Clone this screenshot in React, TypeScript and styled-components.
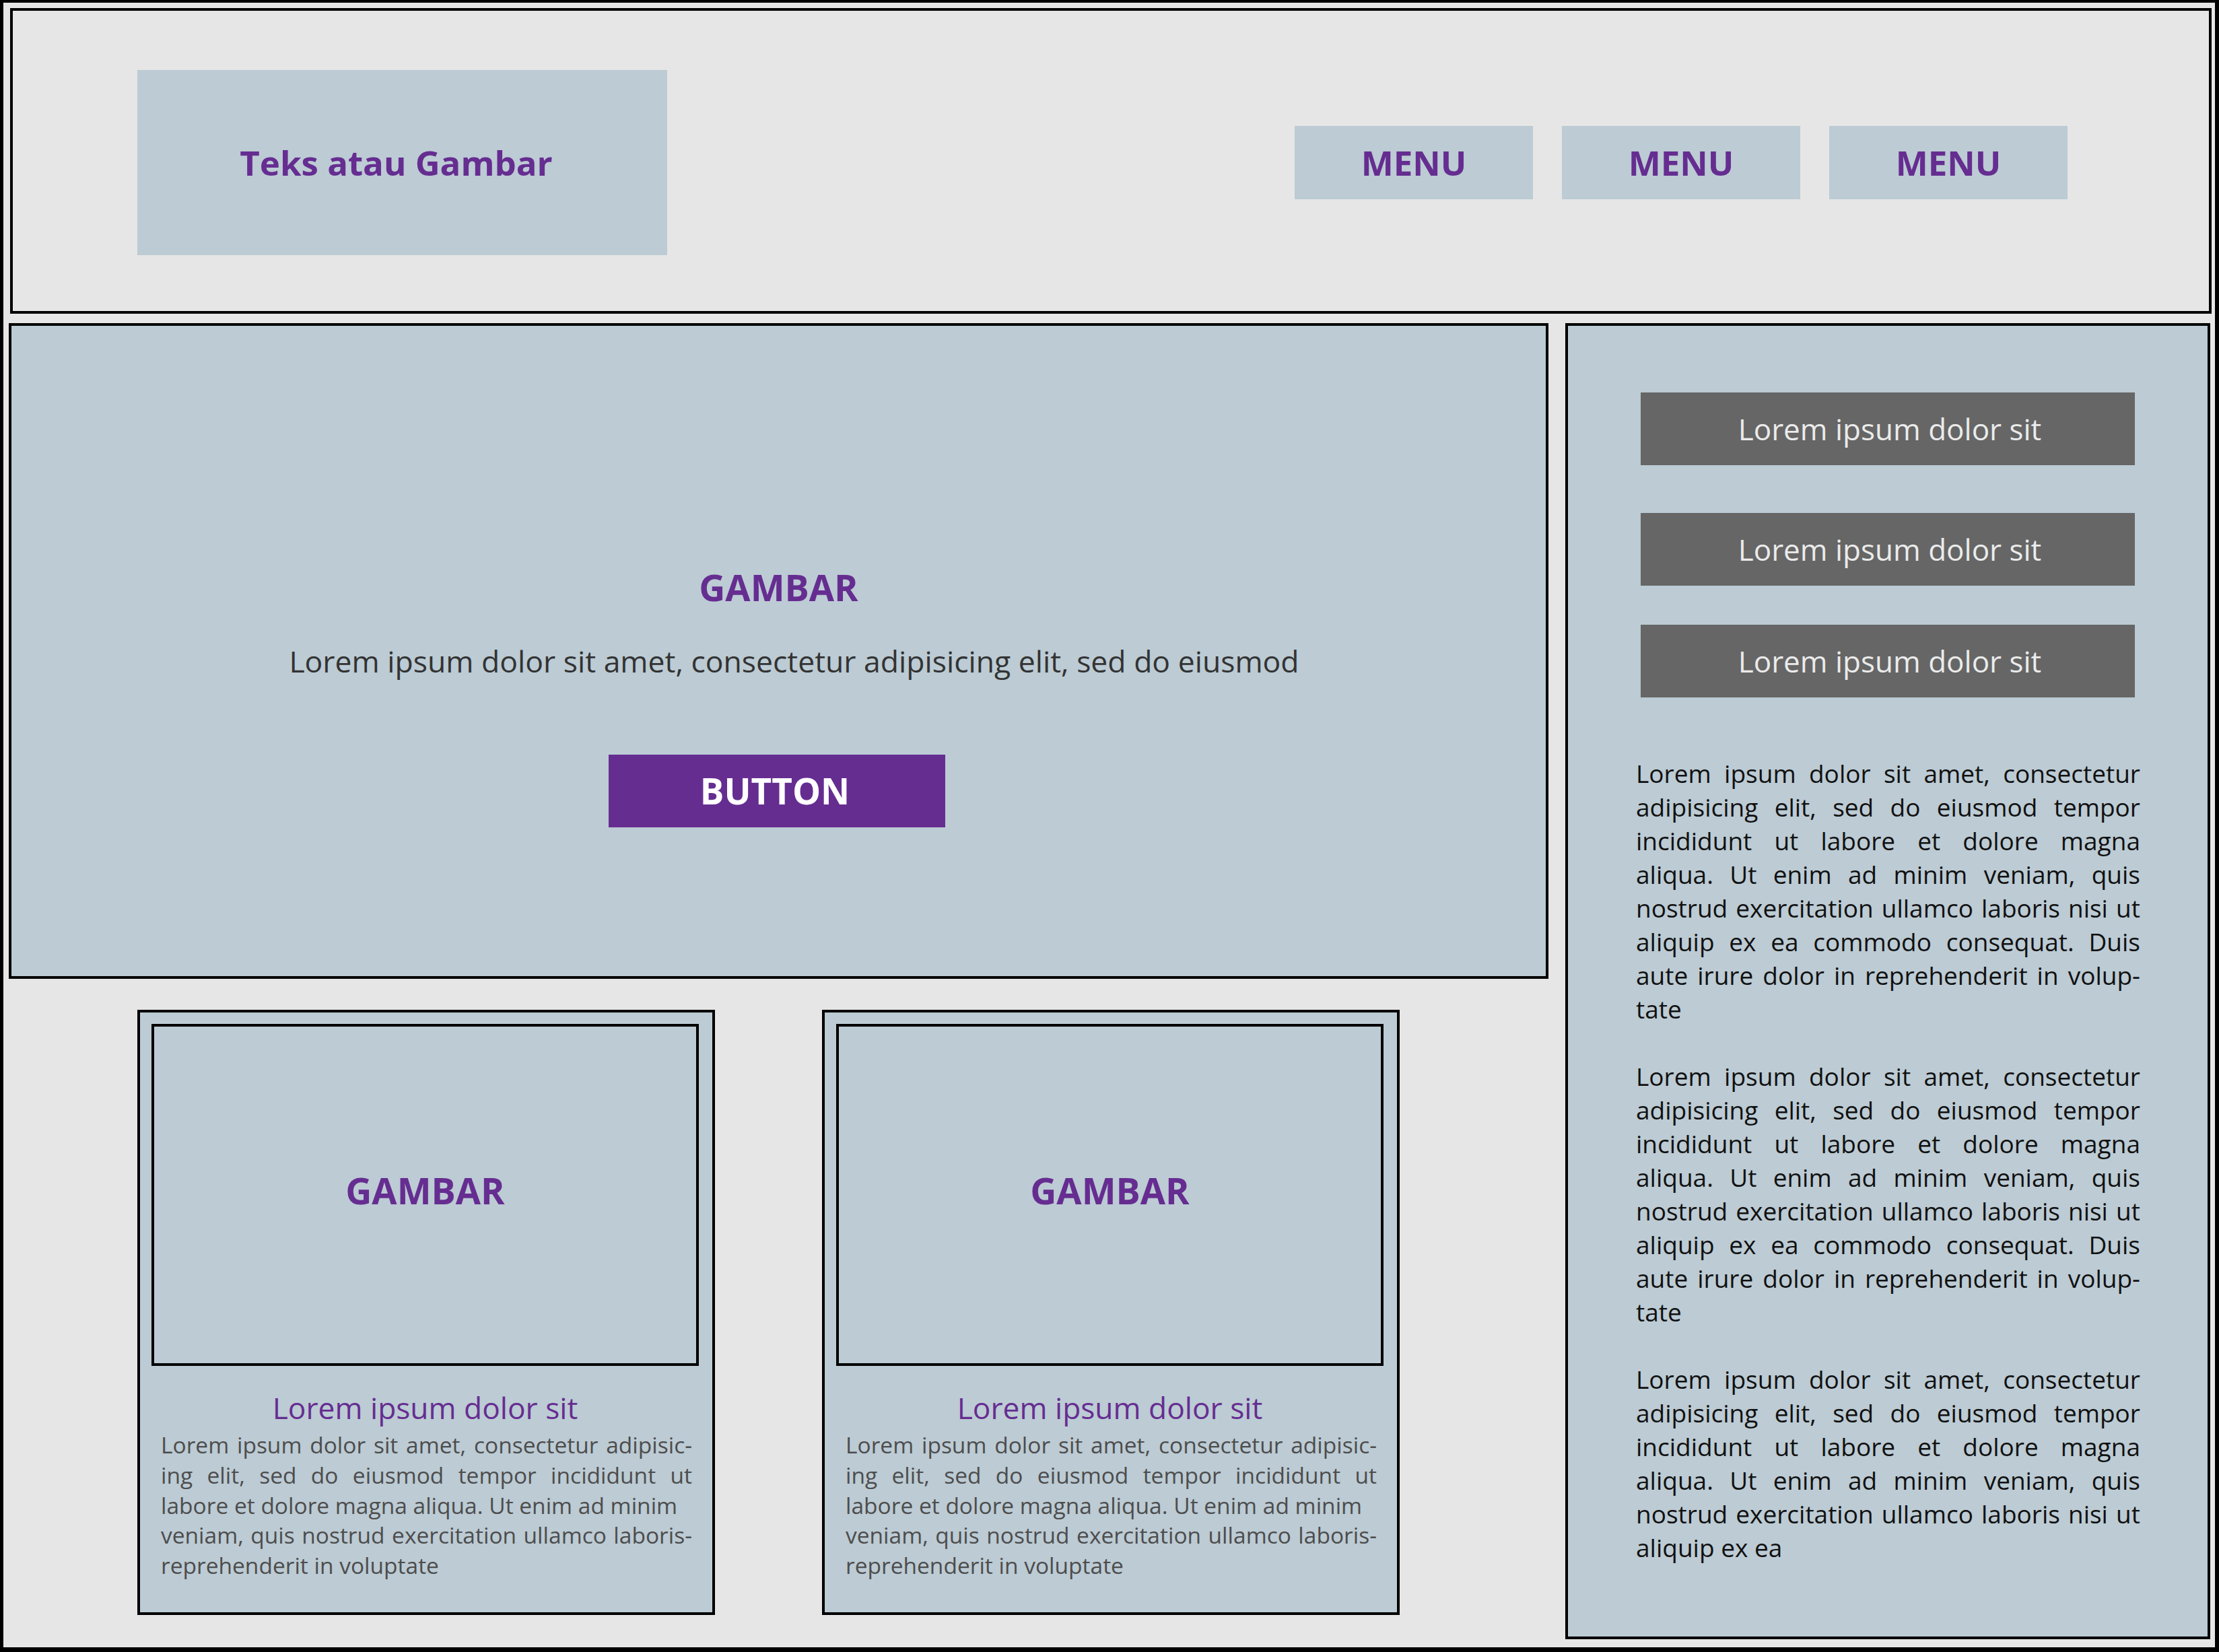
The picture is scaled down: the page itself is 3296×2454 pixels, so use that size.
import React from 'react';
import styled, { createGlobalStyle } from 'styled-components';

const PURPLE = '#662d91';
const PANEL = '#bccbd4';
const PAGE = '#e6e6e6';

const Global = createGlobalStyle`
  html, body { margin: 0; padding: 0; background: ${PAGE}; }
  body { font-family: "Open Sans", "Noto Sans", sans-serif; }
  * { box-sizing: border-box; }
`;

const Frame = styled.div`
  width: 3296px;
  height: 2454px;
  border-style: solid;
  border-color: #000;
  border-width: 4px 6px 7px 5px;
  padding: 8px 7px 12px 8px;
  background: ${PAGE};
  display: flex;
  flex-direction: column;
  font-family: "Open Sans", "Noto Sans", sans-serif;
`;

const Header = styled.header`
  height: 454px;
  margin: 0 -2px 0 2px;
  border: 4px solid #000;
  background: ${PAGE};
  display: flex;
  align-items: center;
  justify-content: space-between;
  padding: 5px 210px 0 185px;
`;

const Logo = styled.div`
  width: 787px;
  height: 275px;
  padding-right: 18px;
  background: ${PANEL};
  display: flex;
  align-items: center;
  justify-content: center;
  color: ${PURPLE};
  font-weight: 700;
  font-size: 51px;
  line-height: 1;
`;

const Nav = styled.nav`
  display: flex;
  gap: 43px;
`;

const MenuItem = styled.a`
  width: 354px;
  height: 109px;
  background: ${PANEL};
  display: flex;
  align-items: center;
  justify-content: center;
  color: ${PURPLE};
  font-weight: 700;
  font-size: 51px;
  line-height: 1;
  text-decoration: none;
`;

const Main = styled.div`
  display: flex;
  gap: 25px;
  margin-top: 14px;
  flex: 1;
  min-height: 0;
`;

const LeftCol = styled.div`
  width: 2287px;
  display: flex;
  flex-direction: column;
`;

const Hero = styled.section`
  height: 974px;
  border: 4px solid #000;
  background: ${PANEL};
  display: flex;
  flex-direction: column;
  align-items: center;
  padding-top: 361px;
`;

const HeroTitle = styled.h1`
  margin: 0;
  font-size: 54px;
  line-height: 1;
  font-weight: 700;
  color: ${PURPLE};
`;

const HeroText = styled.p`
  margin: 61px 0 0 46px;
  font-size: 44.5px;
  line-height: 1;
  color: #333333;
  white-space: nowrap;
`;

const HeroButton = styled.button`
  margin: 116px 5px 0 0;
  width: 500px;
  height: 108px;
  border: 0;
  padding: 0 6px 0 0;
  background: ${PURPLE};
  color: #ffffff;
  font-family: inherit;
  font-weight: 700;
  font-size: 53px;
  line-height: 1;
`;

const Cards = styled.div`
  display: flex;
  gap: 159px;
  padding-left: 191px;
  margin-top: 46px;
`;

const Card = styled.article`
  width: 858px;
  height: 899px;
  border: 4px solid #000;
  background: ${PANEL};
  padding: 17px 20px 0 17px;
  display: flex;
  flex-direction: column;
`;

const ImageBox = styled.div`
  height: 508px;
  border: 4px solid #000;
  display: flex;
  align-items: center;
  justify-content: center;
  padding-bottom: 14px;
`;

const ImageLabel = styled.span`
  font-size: 54px;
  font-weight: 700;
  line-height: 1;
  color: ${PURPLE};
`;

const CardTitle = styled.h2`
  margin: 40px 0 0;
  text-align: center;
  font-size: 44.3px;
  font-weight: 400;
  line-height: 1;
  color: ${PURPLE};
`;

const CardBody = styled.div`
  margin: 11px 10px 0 14px;
  font-size: 33.5px;
  line-height: 44.7px;
  color: #4d4d4d;
`;

const Sidebar = styled.aside`
  width: 958px;
  border: 4px solid #000;
  background: ${PANEL};
  padding-top: 99px;
  display: flex;
  flex-direction: column;
  align-items: center;
`;

const SideButton = styled.div<{ $gap: number }>`
  width: 734px;
  height: 108px;
  margin-top: ${(p) => p.$gap}px;
  padding-left: 6px;
  background: #666666;
  color: #ebebeb;
  font-size: 44px;
  line-height: 1;
  display: flex;
  align-items: center;
  justify-content: center;
`;

const SideText = styled.div`
  width: 749px;
  margin: 88px 0 0 1px;
  font-size: 37px;
  line-height: 50px;
  color: #111111;
  display: flex;
  flex-direction: column;
  gap: 50px;
`;

const Line = styled.div<{ $justify: boolean }>`
  display: flex;
  justify-content: ${(p) => (p.$justify ? 'space-between' : 'flex-start')};
  white-space: pre;
`;

type L = [string, boolean];

const Paragraph: React.FC<{ lines: L[] }> = ({ lines }) => (
  <div>
    {lines.map(([text, justify], i) => (
      <Line key={i} $justify={justify}>
        {justify ? text.split(' ').map((w, j) => <span key={j}>{w}</span>) : <span>{text}</span>}
      </Line>
    ))}
  </div>
);

const sideFull: L[] = [
  ['Lorem ipsum dolor sit amet, consectetur', true],
  ['adipisicing elit, sed do eiusmod tempor', true],
  ['incididunt ut labore et dolore magna', true],
  ['aliqua. Ut enim ad minim veniam, quis', true],
  ['nostrud exercitation ullamco laboris nisi ut', true],
  ['aliquip ex ea commodo consequat. Duis', true],
  ['aute irure dolor in reprehenderit in volup-', true],
  ['tate', false],
];

const sideShort: L[] = [
  ...sideFull.slice(0, 5),
  ['aliquip ex ea', false],
];

const cardLines: L[] = [
  ['Lorem ipsum dolor sit amet, consectetur adipisic-', true],
  ['ing elit, sed do eiusmod tempor incididunt ut', true],
  ['labore et dolore magna aliqua. Ut enim ad minim', false],
  ['veniam, quis nostrud exercitation ullamco laboris-', true],
  ['reprehenderit in voluptate', false],
];

const ContentCard: React.FC = () => (
  <Card>
    <ImageBox>
      <ImageLabel>GAMBAR</ImageLabel>
    </ImageBox>
    <CardTitle>Lorem ipsum dolor sit</CardTitle>
    <CardBody>
      <Paragraph lines={cardLines} />
    </CardBody>
  </Card>
);

export default function App() {
  return (
    <>
      <Global />
      <Frame>
        <Header>
          <Logo>Teks atau Gambar</Logo>
          <Nav>
            <MenuItem>MENU</MenuItem>
            <MenuItem>MENU</MenuItem>
            <MenuItem>MENU</MenuItem>
          </Nav>
        </Header>
        <Main>
          <LeftCol>
            <Hero>
              <HeroTitle>GAMBAR</HeroTitle>
              <HeroText>Lorem ipsum dolor sit amet, consectetur adipisicing elit, sed do eiusmod</HeroText>
              <HeroButton>BUTTON</HeroButton>
            </Hero>
            <Cards>
              <ContentCard />
              <ContentCard />
            </Cards>
          </LeftCol>
          <Sidebar>
            <SideButton $gap={0}>Lorem ipsum dolor sit</SideButton>
            <SideButton $gap={71}>Lorem ipsum dolor sit</SideButton>
            <SideButton $gap={58}>Lorem ipsum dolor sit</SideButton>
            <SideText>
              <Paragraph lines={sideFull} />
              <Paragraph lines={sideFull} />
              <Paragraph lines={sideShort} />
            </SideText>
          </Sidebar>
        </Main>
      </Frame>
    </>
  );
}
